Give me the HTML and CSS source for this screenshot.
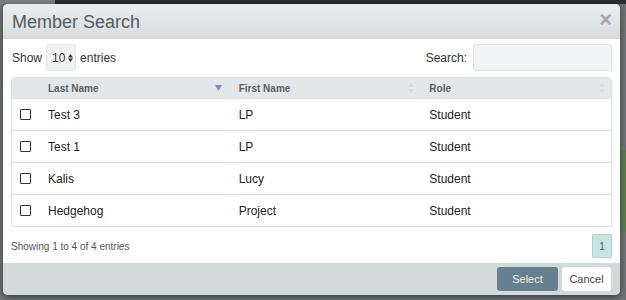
FILE: index.html
```html
<!DOCTYPE html>
<html lang="en">
<head>
    <meta charset="UTF-8">
    <title>Member Search</title>
    <link rel="stylesheet" href="styles.css">
</head>
<body>

    <div class="backdrop">
        <div class="modal">
            <div class="modal-header">
                <h1 class="modal-title">Member Search</h1>
                <span class="close">&times;</span>
            </div>

            <div class="modal-body">
                <div class="controls">
                    <div class="length">
                        Show
                        <span class="select">10
                            <svg class="caret" width="5" height="8" viewBox="0 0 5 8"><path d="M0 3.4L2.5 0L5 3.4Z M0 4.6L2.5 8L5 4.6Z" fill="#333"/></svg>
                        </span>
                        entries
                    </div>
                    <div class="filter">
                        Search:
                        <span class="search-input"></span>
                    </div>
                </div>

                <table class="members">
                    <thead>
                        <tr>
                            <th class="col-check"></th>
                            <th>
                                <div class="th-inner">Last Name
                                    <svg class="sort active" width="7" height="6" viewBox="0 0 7 6"><path d="M0 0H7L3.5 6Z" fill="#8b80d4"/></svg>
                                </div>
                            </th>
                            <th>
                                <div class="th-inner">First Name
                                    <svg class="sort" width="6" height="10" viewBox="0 0 6 10"><path d="M0 4L3 0L6 4Z M0 6L3 10L6 6Z" fill="#d9dcde"/></svg>
                                </div>
                            </th>
                            <th>
                                <div class="th-inner">Role
                                    <svg class="sort" width="6" height="10" viewBox="0 0 6 10"><path d="M0 4L3 0L6 4Z M0 6L3 10L6 6Z" fill="#d9dcde"/></svg>
                                </div>
                            </th>
                        </tr>
                    </thead>
                    <tbody>
                        <tr>
                            <td class="col-check"><span class="checkbox"></span></td>
                            <td>Test 3</td>
                            <td>LP</td>
                            <td>Student</td>
                        </tr>
                        <tr>
                            <td class="col-check"><span class="checkbox"></span></td>
                            <td>Test 1</td>
                            <td>LP</td>
                            <td>Student</td>
                        </tr>
                        <tr>
                            <td class="col-check"><span class="checkbox"></span></td>
                            <td>Kalis</td>
                            <td>Lucy</td>
                            <td>Student</td>
                        </tr>
                        <tr>
                            <td class="col-check"><span class="checkbox"></span></td>
                            <td>Hedgehog</td>
                            <td>Project</td>
                            <td>Student</td>
                        </tr>
                    </tbody>
                </table>

                <div class="table-footer">
                    <div class="info">Showing 1 to 4 of 4 entries</div>
                    <span class="page current">1</span>
                </div>
            </div>

            <div class="modal-footer">
                <button class="btn btn-primary">Select</button>
                <button class="btn btn-default">Cancel</button>
            </div>
        </div>
    </div>

</body>
</html>
```

FILE: styles.css
```css
* {
    box-sizing: border-box;
}
html, body {
    margin: 0;
    height: 100%;
}
body {
    font-family: "Liberation Sans", Arial, sans-serif;
    background: linear-gradient(to right, #7c7f80 0, #7c7f80 55px, #2a2c2d 55px);
    color: #222;
}
.backdrop {
    height: 300px;
    padding: 4px 6px 5px 3px;
    background:
        linear-gradient(to bottom, transparent 150px, #5d7a52 150px, #5d7a52 232px, transparent 232px) right / 6px 100% no-repeat,
        linear-gradient(to bottom, transparent 0, transparent 4px, #6f7374 4px);
}
.modal {
    height: 291px;
    background: #fff;
    border-radius: 5px;
    overflow: hidden;
    display: flex;
    flex-direction: column;
    box-shadow: 0 2px 6px rgba(0, 0, 0, 0.5);
}
.modal-header {
    height: 35px;
    display: flex;
    align-items: center;
    justify-content: space-between;
    padding: 0 8px 0 9px;
    background: linear-gradient(to bottom, #eaedef, #d7dddf);
    border-bottom: 1px solid #d0d6d8;
}
.modal-title {
    margin: 0;
    font-size: 18px;
    font-weight: normal;
    color: #525c61;
    padding-top: 2px;
}
.close {
    font-size: 22px;
    font-weight: bold;
    color: #a8a8a8;
    line-height: 1;
    padding-bottom: 2px;
}
.modal-body {
    flex: 1;
    padding: 5px 8px 5px 8px;
}
.controls {
    display: flex;
    justify-content: space-between;
    align-items: center;
    font-size: 12px;
    color: #333;
    height: 27px;
}
.length, .filter {
    display: flex;
    align-items: center;
    gap: 4px;
}
.length {
    padding-left: 1px;
}
.select {
    display: inline-flex;
    align-items: center;
    gap: 3px;
    height: 27px;
    width: 30px;
    padding-left: 5px;
    background: #f0f2f3;
    border: 1px solid #e0e3e5;
    border-radius: 3px;
    font-size: 12px;
}
.filter {
    gap: 6px;
}
.search-input {
    width: 139px;
    height: 27px;
    background: #f1f3f4;
    border: 1px solid #dfe2e4;
    border-radius: 3px;
}
.members {
    width: 601px;
    margin-top: 6px;
    border-collapse: separate;
    border-spacing: 0;
    border: 1px solid #dcdfe1;
    border-radius: 4px 4px 0 0;
    table-layout: fixed;
}
.members th, .members td {
    text-align: left;
    padding: 0 0 0 9px;
}
.members th {
    height: 20px;
    background: #e4e7e9;
    font-size: 10px;
    font-weight: bold;
    color: #596064;
}
.members td {
    height: 32px;
    font-size: 12px;
    color: #222;
    border-top: 1px solid #dcdfe1;
}
.members .col-check {
    width: 27px;
    padding-left: 8px;
}
.th-inner {
    display: flex;
    align-items: center;
    justify-content: space-between;
    padding-right: 6px;
}
.sort.active {
    margin-right: 2px;
}
.checkbox {
    display: block;
    width: 11px;
    height: 11px;
    border: 1.5px solid #333;
    border-radius: 1px;
}
.table-footer {
    display: flex;
    justify-content: space-between;
    align-items: center;
    margin-top: 7px;
    height: 24px;
}
.info {
    font-size: 10px;
    color: #555;
}
.page {
    display: flex;
    align-items: center;
    justify-content: center;
    width: 20px;
    height: 24px;
    font-size: 10px;
    color: #555;
}
.page.current {
    background: #c7e5e1;
    border: 1px solid #a9d5cf;
    border-radius: 2px;
}
.modal-footer {
    height: 32px;
    background: #d2d9db;
    display: flex;
    justify-content: flex-end;
    align-items: center;
    gap: 4px;
    padding: 0 9px 0 0;
}
.btn {
    height: 24px;
    font-family: "Liberation Sans", Arial, sans-serif;
    font-size: 11px;
    border: none;
    border-radius: 3px;
}
.btn-primary {
    width: 61px;
    background: #66808d;
    color: #eef2f3;
}
.btn-default {
    width: 49px;
    background: #fff;
    color: #444;
}
```
